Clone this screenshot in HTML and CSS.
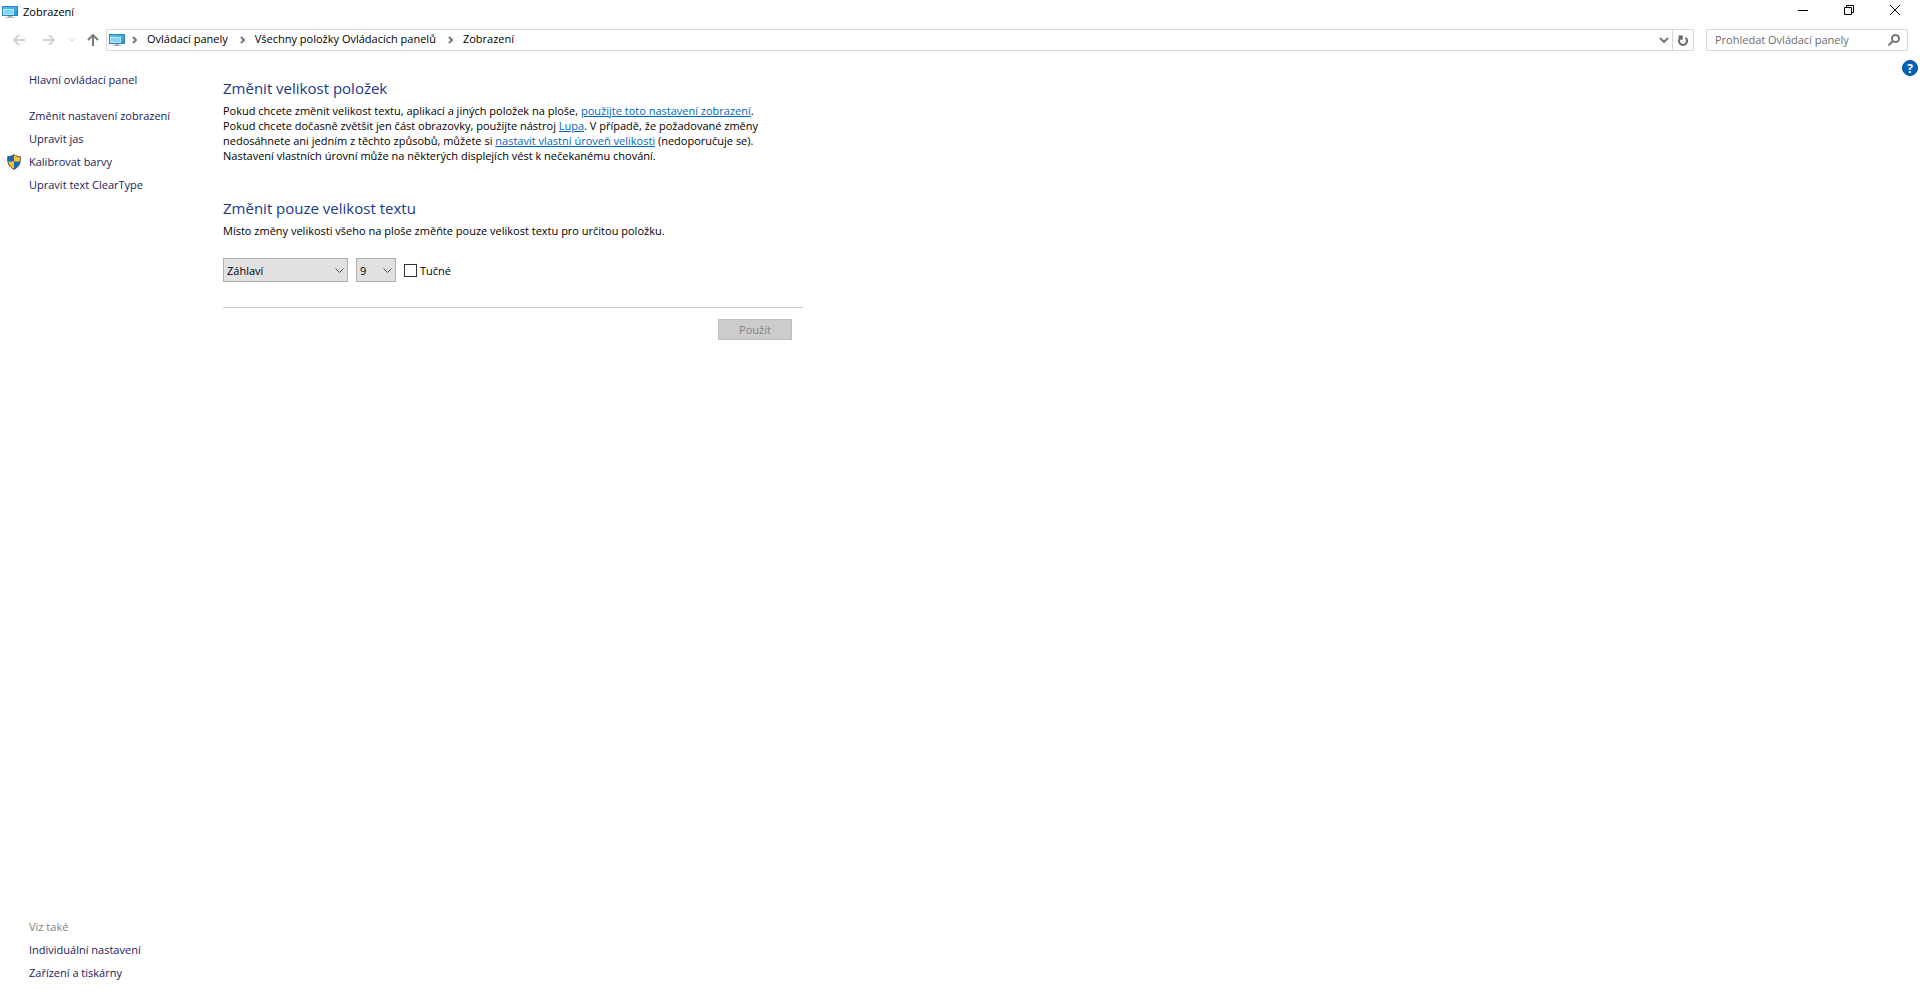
FILE: index.html
```html
<!DOCTYPE html>
<html lang="cs">
<head>
  <meta charset="utf-8">
  <title>Zobrazení</title>
  <link rel="stylesheet" href="styles.css">
</head>
<body>
  <svg class="defs" width="0" height="0" aria-hidden="true">
    <linearGradient id="screen" x1="0" y1="0" x2="1" y2="1">
      <stop offset="0" stop-color="#5fc4f0"/>
      <stop offset="1" stop-color="#2494d8"/>
    </linearGradient>
    <symbol id="monitor" viewBox="0 0 16 12">
      <rect x="0.5" y="0.5" width="15" height="9" fill="url(#screen)" stroke="#2a86ba"/>
      <rect x="1.5" y="3.5" width="10" height="5" fill="#83d4f8" stroke="#b5e6fb"/>
      <path d="M6 10h4v1H6z" fill="#9fb2bd"/>
      <path d="M4 11h8v1H4z" fill="#a5b8c3"/>
    </symbol>
  </svg>

  <header class="titlebar">
    <svg class="monitor" width="16" height="12"><use href="#monitor"/></svg>
    <h1>Zobrazení</h1>
    <div class="window-buttons">
      <button type="button" aria-label="Minimalizovat">
        <svg width="10" height="10"><path d="M0 5.5h10"/></svg>
      </button>
      <button type="button" aria-label="Obnovit">
        <svg width="10" height="10"><path d="M0.5 2.5h7v7h-7zM2.5 2.5v-2h7v7h-2"/></svg>
      </button>
      <button type="button" aria-label="Zavřít">
        <svg width="10" height="10"><path d="M0 0l10 10M10 0L0 10"/></svg>
      </button>
    </div>
  </header>

  <div class="navbar">
    <button type="button" class="nav-arrow" aria-label="Zpět" disabled>
      <svg width="12" height="12"><path d="M12 6H1M6 1L1 6l5 5"/></svg>
    </button>
    <button type="button" class="nav-arrow" aria-label="Vpřed" disabled>
      <svg width="12" height="12"><path d="M0 6h11M6 1l5 5-5 5"/></svg>
    </button>
    <button type="button" class="nav-small" aria-label="Poslední umístění" disabled>
      <svg width="6" height="4"><path d="M0.5 0.5L3 3l2.5-2.5"/></svg>
    </button>
    <button type="button" class="nav-up" aria-label="Nahoru">
      <svg width="12" height="12"><path d="M6 12V1M1 6l5-5 5 5"/></svg>
    </button>
    <nav class="address">
      <svg class="monitor" width="16" height="12"><use href="#monitor"/></svg>
      <svg class="sep" width="5" height="8"><path d="M1 1l3 3-3 3"/></svg>
      <a href="#">Ovládací panely</a>
      <svg class="sep" width="5" height="8"><path d="M1 1l3 3-3 3"/></svg>
      <a href="#">Všechny položky Ovládacích panelů</a>
      <svg class="sep" width="5" height="8"><path d="M1 1l3 3-3 3"/></svg>
      <a href="#">Zobrazení</a>
      <button type="button" class="history" aria-label="Předchozí umístění">
        <svg width="10" height="6"><path d="M1 1l4 4 4-4"/></svg>
      </button>
      <button type="button" class="refresh" aria-label="Aktualizovat">
        <svg width="10" height="11"><path d="M7.5 2.8A4 4 0 1 1 2.5 2.8M0.5 1.5h3.2v3.2"/></svg>
      </button>
    </nav>
    <form class="search">
      <input type="text" aria-label="Prohledat" placeholder="Prohledat Ovládací panely">
      <button type="button" aria-label="Hledat">
        <svg width="12" height="12"><circle cx="7.5" cy="4.5" r="3.5"/><path d="M5 7l-4.5 4.5"/></svg>
      </button>
    </form>
  </div>

  <div class="content">
    <aside class="sidebar">
      <a class="home" href="#">Hlavní ovládací panel</a>
      <a href="#">Změnit nastavení zobrazení</a>
      <a href="#">Upravit jas</a>
      <a class="shielded" href="#">
        <svg width="14" height="16">
          <path d="M7 0.5C5 2 3 2.6 0.7 2.7 0.4 8.5 1.5 12.5 7 15.5z" fill="#1769c0"/>
          <path d="M7 0.5C9 2 11 2.6 13.3 2.7 13.6 8.5 12.5 12.5 7 15.5z" fill="#fcc42c"/>
          <path d="M0.7 7.5H7v8C3 13.3 1.2 11 0.7 7.5z" fill="#fcc42c"/>
          <path d="M7 7.5h6.3C12.8 11 11 13.3 7 15.5z" fill="#1769c0"/>
          <path d="M7 0.7C5 2 3 2.6 0.7 2.7 0.4 8.5 1.5 12.5 7 15.4 12.5 12.5 13.6 8.5 13.3 2.7 11 2.6 9 2 7 0.7z" fill="none" stroke="#45535f"/>
        </svg>
        Kalibrovat barvy
      </a>
      <a href="#">Upravit text ClearType</a>
      <div class="see-also">
        <span>Viz také</span>
        <a href="#">Individuální nastavení</a>
        <a href="#">Zařízení a tiskárny</a>
      </div>
    </aside>

    <main>
      <section>
        <h2>Změnit velikost položek</h2>
        <p>
          Pokud chcete změnit velikost textu, aplikací a jiných položek na ploše, <a href="#">použijte toto nastavení zobrazení</a>.<br>
          Pokud chcete dočasně zvětšit jen část obrazovky, použijte nástroj <a href="#">Lupa</a>. V případě, že požadované změny<br>
          nedosáhnete ani jedním z těchto způsobů, můžete si <a href="#">nastavit vlastní úroveň velikosti</a> (nedoporučuje se).<br>
          Nastavení vlastních úrovní může na některých displejích vést k nečekanému chování.
        </p>
      </section>

      <section>
        <h2>Změnit pouze velikost textu</h2>
        <p>Místo změny velikosti všeho na ploše změňte pouze velikost textu pro určitou položku.</p>
        <form>
          <div class="fields">
            <div class="select item">
              <select aria-label="Položka"><option>Záhlaví</option></select>
              <svg width="9" height="6"><path d="M0.5 0.5l4 4 4-4"/></svg>
            </div>
            <div class="select size">
              <select aria-label="Velikost"><option>9</option></select>
              <svg width="9" height="6"><path d="M0.5 0.5l4 4 4-4"/></svg>
            </div>
            <label><input type="checkbox"> Tučné</label>
          </div>
          <div class="actions">
            <button type="submit" disabled>Použít</button>
          </div>
        </form>
      </section>
    </main>

    <button type="button" class="help" aria-label="Nápověda">?</button>
  </div>
</body>
</html>
```

FILE: styles.css
```css
* {
  box-sizing: border-box;
}
body {
  margin: 0;
  min-height: 100vh;
  display: flex;
  flex-direction: column;
  background: #fff;
  color: #000;
  font-family: "Open Sans", "Noto Sans", sans-serif;
  font-size: 11px;
  line-height: 15px;
  white-space: nowrap;
}
button, input, select {
  font: inherit;
}
button {
  display: flex;
  align-items: center;
  justify-content: center;
  padding: 0;
  border: none;
  background: none;
}
a {
  color: inherit;
  text-decoration: none;
}
svg {
  display: block;
  flex: none;
  fill: none;
}
.defs {
  position: absolute;
}

/* title bar */
.titlebar {
  display: flex;
  align-items: center;
  height: 23px;
  padding: 0 2px;
}
.titlebar h1 {
  margin: 0 auto 0 5px;
  font-size: 11px;
  font-weight: normal;
}
.window-buttons {
  display: flex;
  align-self: flex-start;
  height: 20px;
}
.window-buttons button {
  width: 46px;
}
.window-buttons svg {
  stroke: #000;
}

/* navigation row */
.navbar {
  display: flex;
  align-items: center;
  margin-top: 6px;
  padding: 0 12px 0 4px;
  height: 22px;
}
.nav-arrow {
  width: 30px;
  stroke: #d3d3d3;
  stroke-width: 2px;
}
.nav-small {
  width: 16px;
  stroke: #cfcfcf;
}
.nav-up {
  width: 26px;
  stroke: #7a7a7a;
  stroke-width: 2px;
}
.address {
  flex: 1;
  display: flex;
  align-items: center;
  align-self: stretch;
  padding-left: 2px;
  border: 1px solid #d9d9d9;
}
.address a {
  padding-bottom: 3px;
}
.sep {
  margin: 0 10px 0 7px;
  stroke: #777;
  stroke-width: 2px;
}
.address a + .sep {
  margin-left: 12px;
}
.history {
  width: 16px;
  margin-left: auto;
  stroke: #777;
  stroke-width: 2px;
}
.refresh {
  align-self: stretch;
  width: 21px;
  border-left: 1px solid #d9d9d9;
  stroke: #666;
  stroke-width: 2px;
}
.search {
  display: flex;
  align-self: stretch;
  width: 202px;
  margin-left: 12px;
  border: 1px solid #d9d9d9;
}
.search input {
  flex: 1;
  min-width: 0;
  padding: 0 0 1px 8px;
  border: none;
  outline: none;
}
.search input::placeholder {
  color: #6d6d6d;
}
.search button {
  width: 26px;
  stroke: #777;
  stroke-width: 2px;
}

/* page */
.content {
  flex: 1;
  display: flex;
  align-items: flex-start;
}
.sidebar {
  align-self: stretch;
  display: flex;
  flex-direction: column;
  gap: 8px;
  width: 223px;
  padding: 21px 0 19px 29px;
  color: #1a1a57;
}
.sidebar .home {
  margin-bottom: 13px;
}
.shielded {
  display: flex;
  align-items: center;
  gap: 8px;
  height: 15px;
  margin-left: -22px;
}
.see-also {
  display: flex;
  flex-direction: column;
  gap: 8px;
  margin-top: auto;
}
.see-also span {
  color: #808080;
}
main {
  flex: 1;
  padding-top: 27px;
}
section {
  max-width: 580px;
  margin-bottom: 35px;
}
h2 {
  margin: 0 0 5px;
  color: #19398a;
  font-size: 15px;
  font-weight: normal;
  line-height: 20px;
}
p {
  margin: 0;
}
p a {
  color: #0066bf;
  text-decoration: underline;
}
.fields {
  display: flex;
  align-items: center;
  gap: 8px;
  padding: 20px 0 25px;
  border-bottom: 1px solid #c8c8c8;
}
.select {
  position: relative;
}
.select select {
  appearance: none;
  display: block;
  width: 100%;
  height: 24px;
  padding: 0 3px;
  border: 1px solid #adadad;
  border-radius: 0;
  background: #e1e1e1;
  color: #000;
}
.select svg {
  position: absolute;
  top: 10px;
  right: 4px;
  stroke: #555;
  pointer-events: none;
}
.item {
  width: 125px;
}
.size {
  width: 40px;
}
label {
  display: flex;
  align-items: center;
  gap: 3px;
}
label input {
  appearance: none;
  width: 13px;
  height: 13px;
  margin: 0;
  border: 1px solid #333;
  background: #fff;
}
label input:checked {
  background: #333;
}
.actions {
  display: flex;
  justify-content: flex-end;
  padding: 11px 11px 0;
}
.actions button {
  width: 74px;
  height: 21px;
  border: 1px solid #bfbfbf;
  background: #ccc;
  color: #838383;
}
.help {
  width: 16px;
  height: 16px;
  margin: 9px 2px 0 0;
  border: 1px solid #00509e;
  border-radius: 50%;
  background: #0063b8;
  color: #fff;
  font-size: 12px;
  font-weight: bold;
}
```
